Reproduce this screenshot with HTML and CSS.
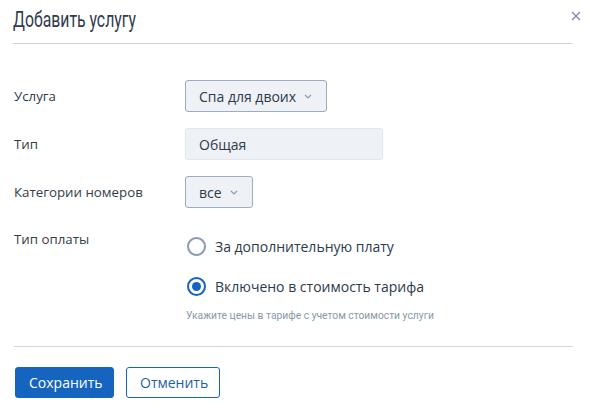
FILE: index.html
```html
<!DOCTYPE html>
<html lang="ru">
<head>
<meta charset="utf-8">
<link rel="stylesheet" href="styles.css">
</head>
<body>
<div class="modal">
  <div class="header">
    <h1 class="title"><span class="title-text">Добавить услугу</span></h1>
    <button class="close" aria-label="Закрыть">
      <svg width="10" height="10" viewBox="0 0 10 10"><path d="M1 1L9 9M9 1L1 9" stroke="#7f93b3" stroke-width="1.5" fill="none"/></svg>
    </button>
  </div>
  <div class="body">
    <div class="row">
      <div class="label">Услуга</div>
      <div class="field"><div class="select">Спа для двоих <span class="chev"><svg width="8" height="5" viewBox="0 0 8 5"><path d="M1 1L4 4L7 1" stroke="#8a9ab0" stroke-width="1.2" fill="none"/></svg></span></div></div>
    </div>
    <div class="row">
      <div class="label">Тип</div>
      <div class="field"><div class="input">Общая</div></div>
    </div>
    <div class="row">
      <div class="label">Категории номеров</div>
      <div class="field"><div class="select">все <span class="chev"><svg width="8" height="5" viewBox="0 0 8 5"><path d="M1 1L4 4L7 1" stroke="#8a9ab0" stroke-width="1.2" fill="none"/></svg></span></div></div>
    </div>
    <div class="row row-pay">
      <div class="label">Тип оплаты</div>
      <div class="field radios">
        <label class="radio"><span class="dot"></span>За дополнительную плату</label>
        <label class="radio checked"><span class="dot"></span>Включено в стоимость тарифа</label>
        <div class="hint">Укажите цены в тарифе с учетом стоимости услуги</div>
      </div>
    </div>
  </div>
  <div class="footer">
    <button class="btn btn-primary">Сохранить</button>
    <button class="btn btn-outline">Отменить</button>
  </div>
</div>
</body>
</html>
```

FILE: styles.css
```css
* { box-sizing: border-box; }
html, body { margin: 0; padding: 0; background: #fff; }
body { font-family: "Open Sans", "Noto Sans", sans-serif; color: #2e3a4a; width: 590px; height: 412px; overflow: hidden; }
.modal { padding: 0 17px 0 14px; }
.header { display: flex; justify-content: space-between; align-items: flex-start; border-bottom: 1px solid #cfd6de; height: 44px; margin-left: -1px; }
.title { margin: 5px 0 0 0; font-family: Roboto, sans-serif; font-weight: 400; font-size: 21.5px; color: #2f3b4c; line-height: 30px; }
.title-text { display: inline-block; transform: scaleX(0.735); transform-origin: left center; white-space: nowrap; }
.close { border: 0; background: none; padding: 0; margin: 10px -9px 0 0; width: 12px; height: 12px; display: flex; align-items: center; justify-content: center; }
.body { padding-top: 36px; height: 303px; border-bottom: 1px solid #cfd6de; }
.row { display: flex; align-items: center; margin-bottom: 16px; }
.label { width: 171px; font-size: 13.3px; color: #333c47; }
.select { display: inline-flex; align-items: center; height: 32px; padding: 0 14px 0 13px; background: #eef1f5; border: 1px solid #9dacc0; border-radius: 3px; font-size: 14px; color: #2e3a4a; }
.chev { display: inline-flex; margin-left: 8px; margin-top: 1px; }
.input { width: 198px; height: 32px; display: flex; align-items: center; padding-left: 13px; background: #eef1f5; border: 1px solid #e1e6ec; border-radius: 3px; font-size: 14px; color: #2e3a4a; }
.row-pay { align-items: flex-start; margin-top: 22px; }
.radios { display: flex; flex-direction: column; margin-top: 6px; }
.radio { display: flex; align-items: center; font-size: 14px; color: #2e3a4a; height: 20px; margin-bottom: 20px; margin-left: 2px; }
.dot { width: 19px; height: 19px; border: 2px solid #8a9ab0; border-radius: 50%; margin-right: 9px; display: inline-block; position: relative; }
.radio.checked .dot { border-color: #1565c0; }
.radio.checked .dot::after { content: ""; position: absolute; left: 3px; top: 3px; width: 9px; height: 9px; border-radius: 50%; background: #1565c0; }
.hint { font-family: Roboto, sans-serif; font-size: 10.3px; color: #8a97a8; margin-top: -7px; margin-left: 1px; }
.footer { display: flex; gap: 12px; padding-top: 20px; margin-left: 1px; }
.btn { height: 31px; font-family: "Open Sans", sans-serif; font-size: 14px; border-radius: 3px; padding: 0 13px; }
.btn-primary { background: #1565c0; border: 1px solid #1565c0; color: #fff; width: 99px; }
.btn-outline { background: #fff; border: 1px solid #1565c0; color: #1f5fa8; width: 94px; }
```
